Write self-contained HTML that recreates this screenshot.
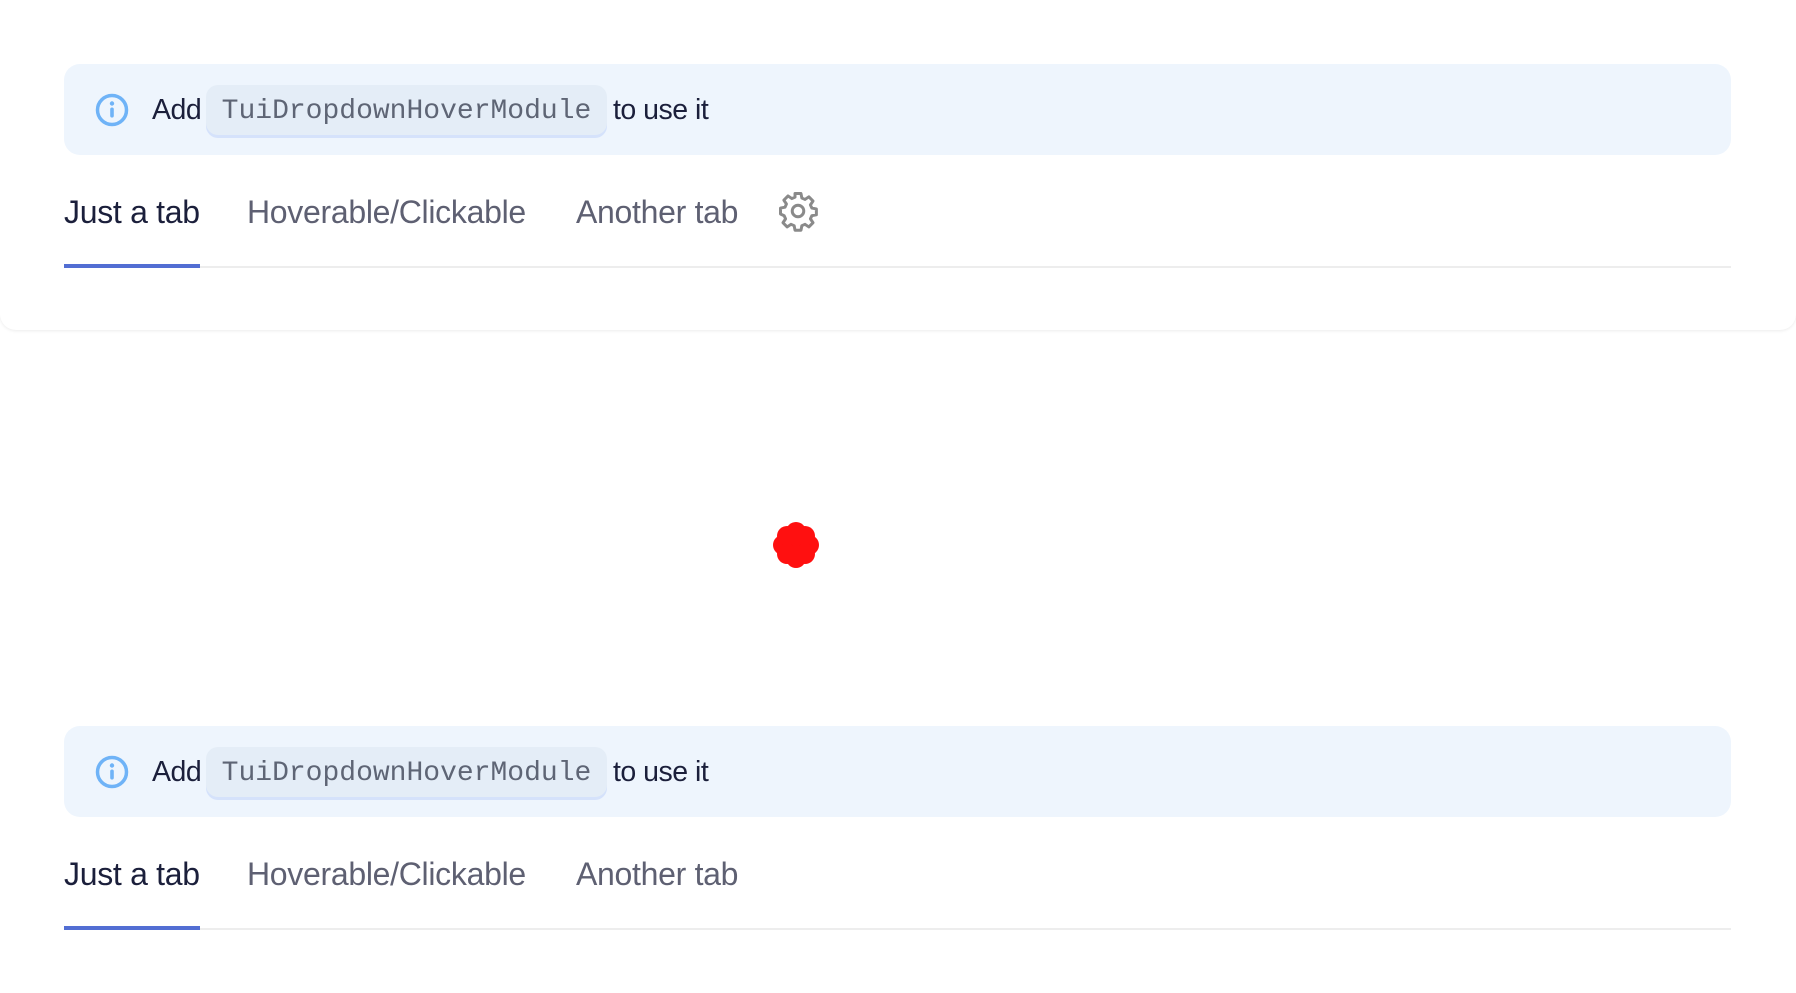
<!DOCTYPE html>
<html><head><style>
html,body{margin:0;padding:0;width:1796px;height:993px;overflow:hidden;background:#fff;font-family:"Liberation Sans",sans-serif;}
.card{position:absolute;left:0;top:0;width:1796px;height:330px;background:#fff;border-radius:0 0 16px 16px;box-shadow:0 1px 3px rgba(0,0,0,0.08);}
.banner{position:absolute;left:64px;width:1667px;height:91px;background:#eef5fd;border-radius:16px;}
.ic{position:absolute;left:31px;top:29px;}
.add{position:absolute;left:88px;top:30px;font-size:28.5px;color:#1b1f3b;letter-spacing:-0.5px;}
.chip{position:absolute;left:142px;top:21px;width:401px;height:50px;background:#e4edf7;border-radius:12px;box-shadow:0 3px 0 #d5e2fb;font-family:"Liberation Mono",monospace;font-size:28px;color:#5e6575;line-height:54px;text-align:center;}
.use{position:absolute;left:549px;top:30px;font-size:28.5px;color:#1b1f3b;letter-spacing:-0.5px;}
.tabs{position:absolute;left:64px;width:1667px;height:80px;border-bottom:2px solid #ededed;}
.tab{position:absolute;top:8px;font-size:32px;color:#5e6072;letter-spacing:-0.3px;}
.tab.a{color:#1b1f3b;}
.ul{position:absolute;left:0;bottom:-2px;width:136px;height:4px;background:#526ed3;}
</style></head><body>
<div class="card"></div>
<div class="banner" style="top:64px">
 <svg class="ic" width="34" height="34" viewBox="0 0 34 34"><circle cx="17" cy="17" r="14.5" fill="none" stroke="#6fb3f7" stroke-width="3.5"/><circle cx="17" cy="10.5" r="2.2" fill="#6fb3f7"/><rect x="15.2" y="14.5" width="3.6" height="10" rx="1.8" fill="#6fb3f7"/></svg>
 <div class="add">Add</div><div class="chip">TuiDropdownHoverModule</div><div class="use">to use it</div>
</div>
<div class="tabs" style="top:186px">
 <div class="tab a" style="left:0">Just a tab</div>
 <div class="tab" style="left:183px">Hoverable/Clickable</div>
 <div class="tab" style="left:512px">Another tab</div>
 <svg style="position:absolute;left:713px;top:4px" width="42" height="42" viewBox="0 0 24 24"><path fill="none" stroke="#8a8a8a" stroke-width="1.7" stroke-linejoin="round" d="M10.3 2h3.4l.5 2.6 1.8.8 2.2-1.5 2.4 2.4-1.5 2.2.8 1.8 2.6.5v3.4l-2.6.5-.8 1.8 1.5 2.2-2.4 2.4-2.2-1.5-1.8.8-.5 2.6h-3.4l-.5-2.6-1.8-.8-2.2 1.5-2.4-2.4 1.5-2.2-.8-1.8L2 13.7v-3.4l2.6-.5.8-1.8-1.5-2.2 2.4-2.4 2.2 1.5 1.8-.8z"/><circle cx="12" cy="12" r="3.3" fill="none" stroke="#8a8a8a" stroke-width="1.7"/></svg>
 <div class="ul"></div>
</div>
<svg style="position:absolute;left:771px;top:520px" width="50" height="50" viewBox="0 0 50 50"><g fill="#ff1010"><circle cx="25" cy="25" r="19"/><circle cx="25" cy="12" r="10"/><circle cx="25" cy="38" r="10"/><circle cx="12" cy="25" r="10"/><circle cx="38" cy="25" r="10"/><circle cx="16" cy="16" r="10"/><circle cx="34" cy="16" r="10"/><circle cx="16" cy="34" r="10"/><circle cx="34" cy="34" r="10"/></g></svg>
<div class="banner" style="top:726px">
 <svg class="ic" width="34" height="34" viewBox="0 0 34 34"><circle cx="17" cy="17" r="14.5" fill="none" stroke="#6fb3f7" stroke-width="3.5"/><circle cx="17" cy="10.5" r="2.2" fill="#6fb3f7"/><rect x="15.2" y="14.5" width="3.6" height="10" rx="1.8" fill="#6fb3f7"/></svg>
 <div class="add">Add</div><div class="chip">TuiDropdownHoverModule</div><div class="use">to use it</div>
</div>
<div class="tabs" style="top:848px">
 <div class="tab a" style="left:0">Just a tab</div>
 <div class="tab" style="left:183px">Hoverable/Clickable</div>
 <div class="tab" style="left:512px">Another tab</div>
 <div class="ul"></div>
</div>
</body></html>
